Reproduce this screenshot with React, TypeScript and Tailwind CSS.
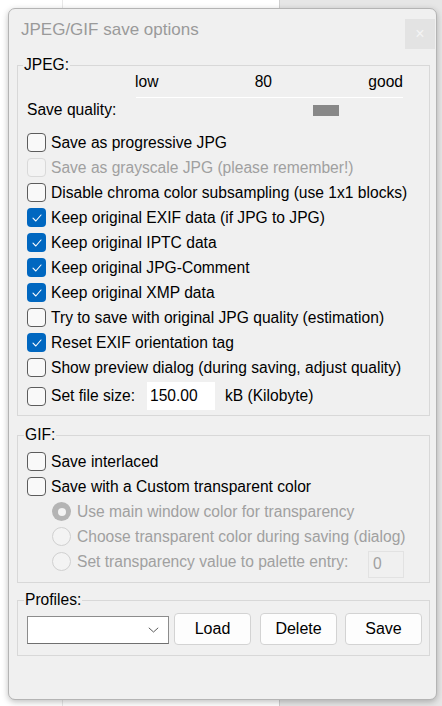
import React from 'react';

const font = { fontFamily: '"Liberation Sans", Arial, sans-serif' };

const Check = ({ checked = false, disabled = false }: { checked?: boolean; disabled?: boolean }) => {
  if (checked) {
    return (
      <span className="flex h-[19px] w-[19px] shrink-0 items-center justify-center rounded-[4px] bg-[#0067c0]">
        <svg width="10" height="8" viewBox="0 0 10 8" fill="none">
          <path d="M1 4.2 L3.8 7 L9 1" stroke="white" strokeWidth="1.1" strokeLinecap="round" strokeLinejoin="round" />
        </svg>
      </span>
    );
  }
  return (
    <span
      className={
        disabled
          ? 'h-[19px] w-[19px] shrink-0 rounded-[4px] border border-[#d9d9d9] bg-[#f3f3f3]'
          : 'h-[19px] w-[19px] shrink-0 rounded-[4px] border border-[#5c5c5c] bg-[#f9f9f9]'
      }
    />
  );
};

const CheckRow = ({ label, checked, disabled }: { label: string; checked?: boolean; disabled?: boolean }) => (
  <div className="flex h-[25px] items-center gap-[5px] pl-[9px]">
    <Check checked={checked} disabled={disabled} />
    <span className={disabled ? 'text-[#a0a0a0]' : 'text-black'}>{label}</span>
  </div>
);

const Radio = ({ selected = false }: { selected?: boolean }) =>
  selected ? (
    <span className="flex h-[19px] w-[19px] shrink-0 items-center justify-center rounded-full bg-[#b4b4b4]">
      <span className="h-[8px] w-[8px] rounded-full bg-[#f3f3f3]" />
    </span>
  ) : (
    <span className="h-[19px] w-[19px] shrink-0 rounded-full border border-[#d0d0d0] bg-[#f3f3f3]" />
  );

const RadioRow = ({ label, selected, children }: { label: string; selected?: boolean; children?: React.ReactNode }) => (
  <div className="flex h-[25px] items-center gap-[6px] pl-[34px] text-[#a0a0a0]">
    <Radio selected={selected} />
    <span className={children ? 'w-[285px]' : ''}>{label}</span>
    {children}
  </div>
);

const ProfileButton = ({ label, className }: { label: string; className: string }) => (
  <button
    className={`flex h-[32px] w-[77px] items-center justify-center rounded-[4px] border border-[#d3d3d3] bg-[#fdfdfd] text-[16px] text-black ${className}`}
  >
    {label}
  </button>
);

export default function App() {
  return (
    <div className="relative flex h-[706px] w-[442px] overflow-hidden bg-white text-[15.6px]" style={font}>
      <div className="h-full w-[63px] border-r border-[#e8e8e8]" />
      <div className="h-full w-[216px]" />
      <div className="h-full flex-1 border-l border-[#cfcfcf] bg-[#e6e6e6]" />

      <div className="absolute left-[8px] top-[8px] flex h-[692px] w-[429px] flex-col rounded-[7px] border border-[#b4b4b4] bg-[#f0f0f0] shadow-[0_2px_6px_rgba(0,0,0,0.25)]">
        <div className="flex h-[42px] justify-between">
          <span className="self-center pl-[12px] text-[17px] text-[#9a9a9a]">JPEG/GIF save options</span>
          <div className="mr-[1px] mt-[10px] flex h-[30px] w-[30px] items-center justify-center bg-[#e3e3e3] text-[16px] leading-none text-[#f4f4f4]">
            ×
          </div>
        </div>

        <fieldset className="ml-[8px] mt-[5px] w-[413px] border border-[#d8d8d8] pb-[4px]">
          <legend className="ml-[5px] px-[1px] leading-[18px]">JPEG:</legend>
          <div className="ml-[117px] flex h-[16px] w-[268px] justify-between leading-[16px]">
            <span>low</span>
            <span>80</span>
            <span>good</span>
          </div>
          <div className="ml-[118px] mt-[7px] h-px w-[267px] bg-white" />
          <div className="flex h-[24px] items-center pl-[9px]">
            <span className="w-[286px]">Save quality:</span>
            <span className="h-[11px] w-[26px] bg-[#888888]" />
          </div>
          <div className="mt-[8px]">
            <CheckRow label="Save as progressive JPG" />
            <CheckRow label="Save as grayscale JPG (please remember!)" disabled />
            <CheckRow label="Disable chroma color subsampling (use 1x1 blocks)" />
            <CheckRow label="Keep original EXIF data (if JPG to JPG)" checked />
            <CheckRow label="Keep original IPTC data" checked />
            <CheckRow label="Keep original JPG-Comment" checked />
            <CheckRow label="Keep original XMP data" checked />
            <CheckRow label="Try to save with original JPG quality (estimation)" />
            <CheckRow label="Reset EXIF orientation tag" checked />
            <CheckRow label="Show preview dialog (during saving, adjust quality)" />
          </div>
          <div className="mt-[1px] flex h-[30px] items-center pl-[9px]">
            <Check />
            <span className="ml-[5px] w-[96px]">Set file size:</span>
            <div className="flex h-[28px] w-[68px] items-center bg-white pl-[3px] text-black">150.00</div>
            <span className="ml-[10px]">kB (Kilobyte)</span>
          </div>
        </fieldset>

        <fieldset className="ml-[8px] mt-[10px] w-[413px] border border-[#d8d8d8] pb-[8px]">
          <legend className="ml-[6px] px-[1px] leading-[18px]">GIF:</legend>
          <div className="mt-[5px]">
            <CheckRow label="Save interlaced" />
            <CheckRow label="Save with a Custom transparent color" />
            <RadioRow label="Use main window color for transparency" selected />
            <RadioRow label="Choose transparent color during saving (dialog)" />
            <RadioRow label="Set transparency value to palette entry:">
              <div className="mt-[5px] flex h-[27px] w-[36px] items-center border border-[#e2e2e2] pl-[4px] text-[#a0a0a0]">
                0
              </div>
            </RadioRow>
          </div>
        </fieldset>

        <fieldset className="ml-[8px] mt-[8px] w-[413px] border border-[#d8d8d8] pb-[10px]">
          <legend className="ml-[6px] px-[1px] leading-[18px]">Profiles:</legend>
          <div className="mt-[4px] flex h-[32px] items-center pl-[9px]">
            <div className="mt-[2px] flex h-[28px] w-[142px] items-center justify-end border border-[#8c8c8c] border-b-[#6f6f6f] bg-white pr-[9px]">
              <svg width="11" height="6" viewBox="0 0 11 6" fill="none">
                <path d="M0.8 0.8 L5.5 5 L10.2 0.8" stroke="#5a5a5a" strokeWidth="1" />
              </svg>
            </div>
            <ProfileButton label="Load" className="ml-[5px]" />
            <ProfileButton label="Delete" className="ml-[9px]" />
            <ProfileButton label="Save" className="ml-[8px]" />
          </div>
        </fieldset>
      </div>
    </div>
  );
}
